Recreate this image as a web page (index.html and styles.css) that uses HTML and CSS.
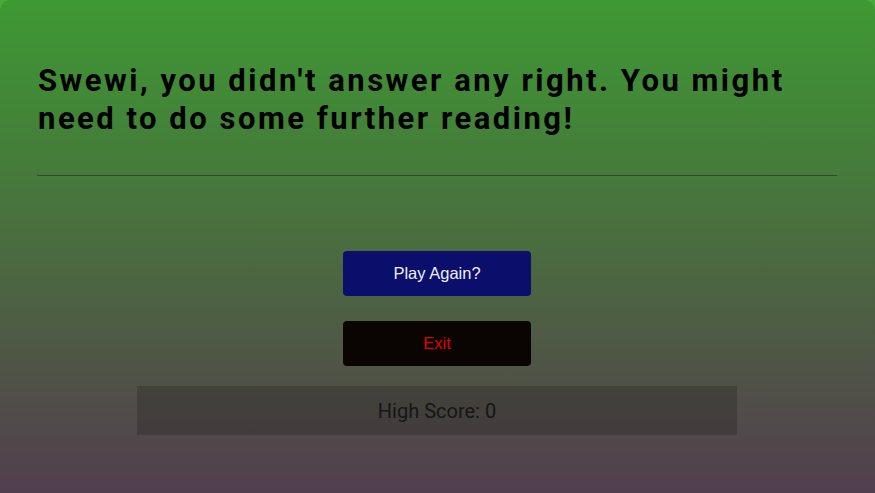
FILE: index.html
```html
<!DOCTYPE html>
<html>
<head>
<meta charset="utf-8">
<link rel="stylesheet" href="styles.css">
</head>
<body>
<main class="card">
  <h1 class="result">Swewi, you didn't answer any right. You might need to do some further reading!</h1>
  <hr class="divider">
  <div class="actions">
    <button class="btn btn-play">Play Again?</button>
    <button class="btn btn-exit">Exit</button>
    <div class="highscore">High Score: 0</div>
  </div>
</main>
</body>
</html>
```
FILE: styles.css
```css
html, body {
  margin: 0;
  padding: 0;
  height: 100%;
  overflow: hidden;
}
body {
  background: #4aab3c;
  font-family: Roboto, "Liberation Sans", sans-serif;
}
.card {
  box-sizing: border-box;
  min-height: 100%;
  border-radius: 10px 10px 0 0;
  padding: 62px 38px 40px 37px;
  background: linear-gradient(to bottom, #3e9933 0%, #447f3a 30%, #4b6a40 52%, #504f48 80%, #523f4e 100%);
}
.result {
  margin: 0 0 0 1px;
  max-width: 770px;
  font-size: 31px;
  line-height: 38px;
  font-weight: 700;
  letter-spacing: 2.5px;
  color: #000;
}
.divider {
  margin: 37px 0 0 0;
  border: 0;
  border-top: 1px solid #2f4a2b;
  height: 0;
}
.actions {
  display: flex;
  flex-direction: column;
  align-items: center;
  margin-top: 75px;
}
.btn {
  width: 188px;
  height: 45px;
  border: 0;
  border-radius: 4px;
  font-family: "Liberation Sans", Arial, sans-serif;
  font-size: 16.5px;
}
.btn-play {
  background: #0b0f6b;
  color: #eeeef8;
}
.btn-exit {
  margin-top: 25px;
  background: #0a0502;
  color: #e00000;
}
.highscore {
  margin-top: 20px;
  width: 600px;
  height: 49px;
  display: flex;
  align-items: center;
  justify-content: center;
  background: rgba(0, 0, 0, 0.17);
  color: #161616;
  font-size: 20px;
}
```
